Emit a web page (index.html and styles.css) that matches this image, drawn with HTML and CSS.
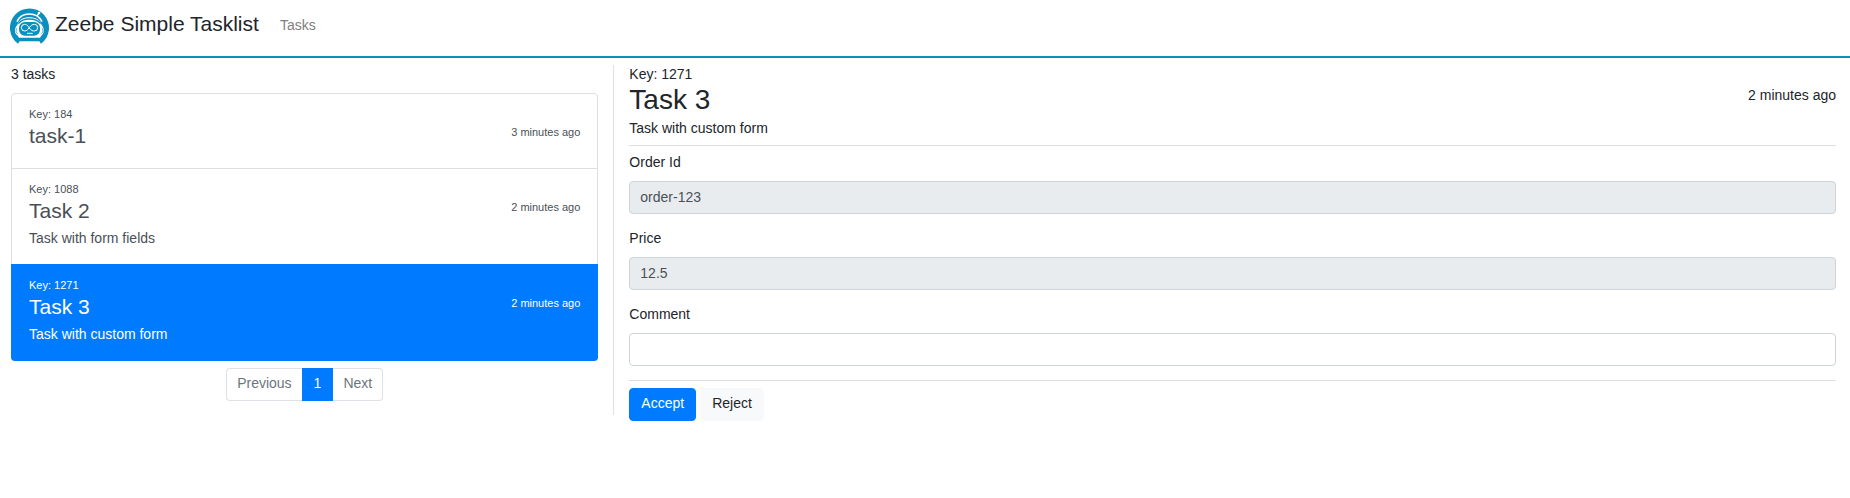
FILE: index.html
```html
<!DOCTYPE html>
<html lang="en">
<head>
<meta charset="utf-8">
<title>Zeebe Simple Tasklist</title>
<link rel="stylesheet" href="styles.css">
</head>
<body>
<header class="navbar">
  <a class="brand" href="#">
    <svg class="logo" viewBox="6 9 120 108" aria-hidden="true">
      <path d="M30 116A58.500 58.500 0 1 1 99 116L94 109H35Z" fill="#0a8fbf"/>
      <path d="M27 50C34 34 48 27 64 27S94 34 102 50" fill="none" stroke="#fff" stroke-width="5"/>
      <path d="M28 60C32 44 47 37 64 37S97 44 101 60C110 70 109 86 101 91L96 98H33L28 91C19 86 18 70 28 60Z" fill="#fff"/>
      <path d="M31 56C38 47 50 42 64 42S91 47 98 56" fill="none" stroke="#0a8fbf" stroke-width="4"/>
      <path d="M26 70C23 77 24 83 29 86M103 70C106 77 105 83 100 86" fill="none" stroke="#0a8fbf" stroke-width="2"/>
      <rect x="33" y="51" width="63" height="41" rx="18" fill="#0a8fbf"/>
      <path d="M64 69C58 59 54 58 50 58A10 10 0 0 0 50 78C56 78 60 74 64 68S73 58 79 58A10 10 0 0 1 79 78C74 78 70 77 64 69Z" fill="none" stroke="#fff" stroke-width="3"/>
      <path d="M57 85H74" stroke="#fff" stroke-width="3"/>
      <path d="M87 33L92 26" stroke="#fff" stroke-width="4"/>
      <circle cx="93" cy="24" r="4" fill="#fff"/>
    </svg>
    <span>Zeebe Simple Tasklist</span>
  </a>
  <nav><a class="nav-link" href="#">Tasks</a></nav>
</header>
<main class="columns">
  <section class="tasks">
    <p class="count">3 tasks</p>
    <div class="list">
      <a class="item" href="#">
        <div class="item-head">
          <div><small>Key: 184</small><h5>task-1</h5></div>
          <small class="ago">3 minutes ago</small>
        </div>
        <p class="desc"></p>
      </a>
      <a class="item" href="#">
        <div class="item-head">
          <div><small>Key: 1088</small><h5>Task 2</h5></div>
          <small class="ago">2 minutes ago</small>
        </div>
        <p class="desc">Task with form fields</p>
      </a>
      <a class="item active" href="#" aria-current="true">
        <div class="item-head">
          <div><small>Key: 1271</small><h5>Task 3</h5></div>
          <small class="ago">2 minutes ago</small>
        </div>
        <p class="desc">Task with custom form</p>
      </a>
    </div>
    <nav class="pagination" aria-label="Pages">
      <a class="page" href="#">Previous</a>
      <a class="page current" href="#" aria-current="page">1</a>
      <a class="page" href="#">Next</a>
    </nav>
  </section>
  <section class="detail">
    <div class="detail-head">
      <div>
        <span class="key">Key: 1271</span>
        <h3>Task 3</h3>
      </div>
      <span class="ago">2 minutes ago</span>
    </div>
    <p class="summary">Task with custom form</p>
    <form class="form">
      <div class="fields">
        <div class="field">
          <label for="order">Order Id</label>
          <input id="order" type="text" value="order-123" readonly>
        </div>
        <div class="field">
          <label for="price">Price</label>
          <input id="price" type="text" value="12.5" readonly>
        </div>
        <div class="field">
          <label for="comment">Comment</label>
          <input id="comment" type="text">
        </div>
      </div>
      <div class="actions">
        <button class="btn primary" type="button">Accept</button>
        <button class="btn light" type="button">Reject</button>
      </div>
    </form>
  </section>
</main>
</body>
</html>
```
FILE: styles.css
```css
* { box-sizing: border-box; }
body {
  margin: 0;
  font: 14px/21px "Liberation Sans", Arial, sans-serif;
  color: #212529;
  background: #fff;
}
h3, h5, p { margin: 0; font-weight: 400; }
a { color: inherit; text-decoration: none; }

.navbar {
  display: flex;
  align-items: flex-start;
  gap: 21px;
  padding: 8px 10px 12px;
  border-bottom: 2px solid #0a8fbf;
}
.brand {
  display: flex;
  gap: 5px;
  font-size: 21px;
  line-height: 32px;
}
.logo { display: block; width: 40px; height: 36px; }
.nav-link { display: block; line-height: 34px; color: #808080; }

.columns {
  display: grid;
  grid-template-columns: 1fr 2fr;
  align-items: start;
  padding: 7px 10px 0 0;
}
.tasks { padding: 0 15px 0 11px; }
.count { margin-bottom: 9px; line-height: 19px; }
.list {
  border: 1px solid #dfdfdf;
  border-radius: 4px;
}
.item {
  display: block;
  padding: 10px 17px 11px;
  color: #495057;
  border-bottom: 1px solid #dfdfdf;
}
.item-head {
  display: flex;
  justify-content: space-between;
  align-items: center;
}
.item small { display: block; font-size: 11px; }
.item .ago, .detail .ago { padding-top: 8px; }
.item h5 { margin-bottom: 6px; font-size: 21px; line-height: 22px; }
.desc { margin-bottom: 4px; }
.item.active {
  margin: -1px;
  padding: 11px 18px 12px;
  color: #fff;
  background: #007bff;
  border: 0;
  border-radius: 0 0 4px 4px;
}

.pagination {
  display: flex;
  justify-content: center;
  margin-top: 7px;
}
.page {
  padding: 4px 10px 6px;
  border: 1px solid #dee2e6;
  color: #6c757d;
}
.page:first-child { border-right: 0; border-radius: 4px 0 0 4px; }
.page:last-child { border-left: 0; border-radius: 0 4px 4px 0; }
.page.current { padding: 4px 11px 6px; color: #fff; background: #007bff; border-color: #007bff; }

.detail { position: relative; padding: 0 4px 0 16px; }
.detail::before {
  content: "";
  position: absolute;
  top: 0;
  bottom: 6px;
  left: 0;
  border-left: 1px solid #dee2e6;
}
.detail-head {
  display: flex;
  justify-content: space-between;
  align-items: center;
}
.key { display: block; margin-bottom: 2px; line-height: 19px; }
.detail h3 { margin-bottom: 4px; font-size: 28px; line-height: 28px; }
.summary { padding-bottom: 6px; border-bottom: 1px solid #dfdfdf; }
.fields {
  display: grid;
  gap: 14px;
  padding: 6px 0 14px;
  border-bottom: 1px solid #dfdfdf;
}
.field label { display: block; margin-bottom: 8px; }
.field input {
  display: block;
  width: 100%;
  height: 33px;
  padding: 4px 10px 6px;
  font: inherit;
  color: #495057;
  background: #fff;
  border: 1px solid #ced4da;
  border-radius: 4px;
}
.field input:read-only { background: #e9ecef; }
.actions { display: flex; gap: 4px; padding-top: 7px; }
.btn {
  padding: 4px 11px 6px;
  font: inherit;
  border: 1px solid transparent;
  border-radius: 4px;
}
.primary { color: #fff; background: #007bff; border-color: #007bff; }
.light { color: #212529; background: #f8f9fa; border-color: #f8f9fa; }
```
